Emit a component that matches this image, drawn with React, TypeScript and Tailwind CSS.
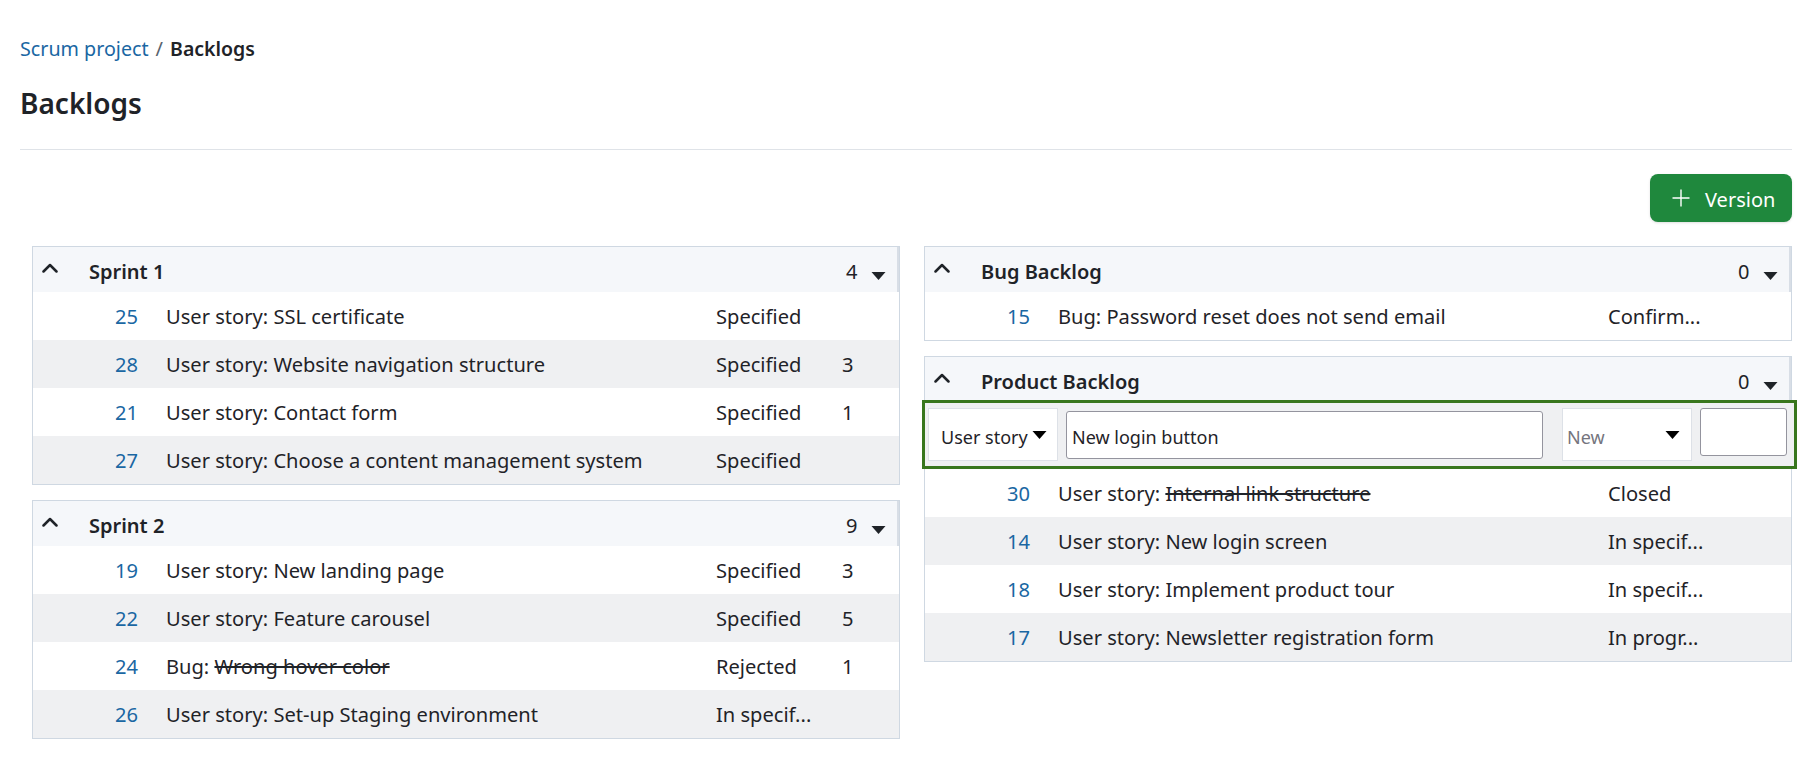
import React from "react";

type Row = { id: string; pre: string; title: string; strike?: boolean; status: string; pts?: string };

const sprint1: Row[] = [
  { id: "25", pre: "User story: ", title: "SSL certificate", status: "Specified" },
  { id: "28", pre: "User story: ", title: "Website navigation structure", status: "Specified", pts: "3" },
  { id: "21", pre: "User story: ", title: "Contact form", status: "Specified", pts: "1" },
  { id: "27", pre: "User story: ", title: "Choose a content management system", status: "Specified" },
];
const sprint2: Row[] = [
  { id: "19", pre: "User story: ", title: "New landing page", status: "Specified", pts: "3" },
  { id: "22", pre: "User story: ", title: "Feature carousel", status: "Specified", pts: "5" },
  { id: "24", pre: "Bug: ", title: "Wrong hover color", strike: true, status: "Rejected", pts: "1" },
  { id: "26", pre: "User story: ", title: "Set-up Staging environment", status: "In specif..." },
];
const bugs: Row[] = [{ id: "15", pre: "Bug: ", title: "Password reset does not send email", status: "Confirm..." }];
const product: Row[] = [
  { id: "30", pre: "User story: ", title: "Internal link structure", strike: true, status: "Closed" },
  { id: "14", pre: "User story: ", title: "New login screen", status: "In specif..." },
  { id: "18", pre: "User story: ", title: "Implement product tour", status: "In specif..." },
  { id: "17", pre: "User story: ", title: "Newsletter registration form", status: "In progr..." },
];

function Chevron() {
  return (
    <svg width="16" height="10" viewBox="0 0 16 10" fill="none" className="block">
      <path d="M1.5 8.5 L8 2 L14.5 8.5" stroke="#1f2328" strokeWidth="2.5" strokeLinecap="round" strokeLinejoin="round" />
    </svg>
  );
}

function Caret({ w = 15, h = 8, color = "#1f2328" }: { w?: number; h?: number; color?: string }) {
  return (
    <svg width={w} height={h} viewBox="0 0 15 8" className="block shrink-0" preserveAspectRatio="none">
      <path d="M0.5 0 H14.5 L7.5 8 Z" fill={color} />
    </svg>
  );
}

function Header({ title, count }: { title: string; count: string }) {
  return (
    <div className="flex h-[45px] items-center bg-[#f5f7fa] border-r-2 border-[#d8dee6]">
      <div className="w-[56px] pl-[9px] pb-[3px]">
        <Chevron />
      </div>
      <div className="flex-1 pt-1 font-semibold">{title}</div>
      <div className="w-[25px] pt-1">{count}</div>
      <div className="w-[26px] pt-[13px]">
        <Caret />
      </div>
    </div>
  );
}

function StoryRow({ r }: { r: Row }) {
  return (
    <div className="flex h-12 items-center whitespace-nowrap text-[20.1px] odd:bg-white even:bg-[#eff0f2]">
      <a className="w-[105px] text-right text-[#1a67a3]">{r.id}</a>
      <div className="w-[578px] pl-7">
        {r.pre}
        <span className={r.strike ? "line-through" : ""}>{r.title}</span>
      </div>
      <div className="w-[95px]">{r.status}</div>
      <div className="pl-[31px]">{r.pts}</div>
    </div>
  );
}

function Rows({ rows }: { rows: Row[] }) {
  return (
    <div>
      {rows.map((r) => (
        <StoryRow key={r.id} r={r} />
      ))}
    </div>
  );
}

function Panel({ title, count, children }: { title: string; count: string; children: React.ReactNode }) {
  return (
    <div className="border border-[#cfd8e2] bg-white">
      <Header title={title} count={count} />
      {children}
    </div>
  );
}

function NewRow() {
  return (
    <div className="relative z-10 -mt-[2px] -ml-[3px] -mr-[6px] flex h-[69px] items-center whitespace-nowrap border-[3px] border-[#38761d] bg-[#eff0f2] text-[18px]">
      <div className="ml-[3px] flex h-[53px] w-[130px] shrink-0 items-center justify-between border border-[#dde1e7] bg-white pl-[12px] pr-[10px]">
        <span className="pt-[5px]">User story</span>
        <Caret w={15} h={8} color="#000" />
      </div>
      <div className="ml-2 flex h-12 w-[477px] shrink-0 items-center rounded-[3px] border border-[#94949e] bg-white px-[5px] pt-[5px]">
        New login button
      </div>
      <div className="ml-[19px] flex h-[53px] w-[130px] shrink-0 items-center justify-between border border-[#dde1e7] bg-white pl-[4px] pr-[11px]">
        <span className="pt-[5px] text-[#75757e]">New</span>
        <Caret w={15} h={8} color="#000" />
      </div>
      <div className="ml-2 -mt-[5px] h-12 w-[87px] shrink-0 rounded-[3px] border border-[#94949e] bg-white" />
    </div>
  );
}

export default function App() {
  return (
    <div className="min-h-[781px] bg-white pl-5 pr-[15px] pt-[35px] font-['Noto_Sans','Open_Sans',sans-serif] text-[20px] leading-[27px] text-[#1f2328]">
      <nav className="flex h-[27px] items-center">
        <a className="text-[19.7px] text-[#1a67a3]">Scrum project</a>
        <span className="mx-[7px] text-[#59636e]">/</span>
        <span className="font-semibold text-[19.5px]">Backlogs</span>
      </nav>
      <h1 className="mt-[23px] text-[28px] leading-[36px] font-semibold">Backlogs</h1>
      <div className="mt-[28px] h-px bg-[#dfe3e8]" />
      <div className="mt-6 flex justify-end">
        <button className="flex h-12 w-[142px] items-center rounded-lg bg-[#1f883d] pl-[22px] text-white shadow-sm">
          <svg width="18" height="18" viewBox="0 0 18 18" fill="none" className="block">
            <path d="M9 0.5 V17.5 M0.5 9 H17.5" stroke="#fff" strokeWidth="1.4" />
          </svg>
          <span className="ml-[15px] pt-[2px]">Version</span>
        </button>
      </div>
      <div className="mt-6 ml-3 grid grid-cols-[868px_868px] items-start gap-x-6">
        <div className="flex flex-col gap-[15px]">
          <Panel title="Sprint 1" count="4">
            <Rows rows={sprint1} />
          </Panel>
          <Panel title="Sprint 2" count="9">
            <Rows rows={sprint2} />
          </Panel>
        </div>
        <div className="flex flex-col gap-[15px]">
          <Panel title="Bug Backlog" count="0">
            <Rows rows={bugs} />
          </Panel>
          <Panel title="Product Backlog" count="0">
            <NewRow />
            <Rows rows={product} />
          </Panel>
        </div>
      </div>
    </div>
  );
}
